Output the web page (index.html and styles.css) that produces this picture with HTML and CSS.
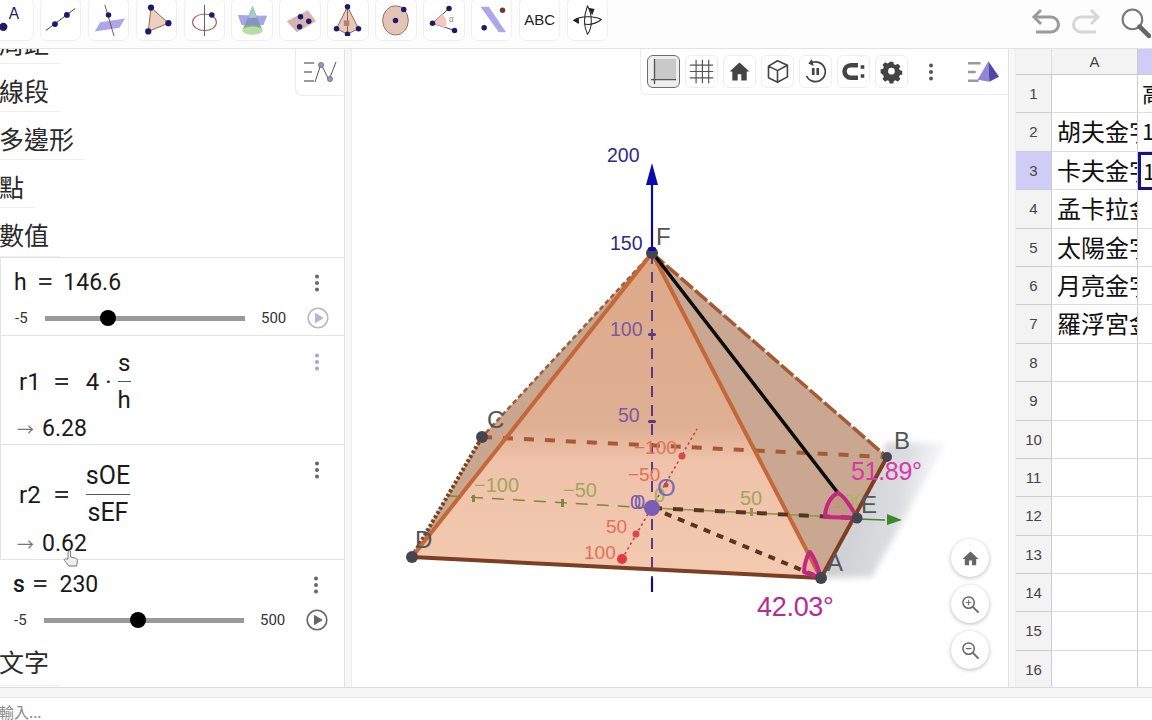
FILE: index.html
```html
<!DOCTYPE html>
<html lang="zh-Hant">
<head>
<meta charset="utf-8">
<title>GeoGebra</title>
<link rel="stylesheet" href="styles.css">
</head>
<body>
<div class="app">
  <header class="toolbar">
    <div class="tools">
      <button class="tool"><svg viewBox="0 0 36 36"><circle cx="8" cy="26" r="4.5" fill="#1b1b6b"/><text x="14" y="17" class="tool-a">A</text></svg></button>
      <button class="tool"><svg viewBox="0 0 36 36"><line x1="2" y1="30" x2="34" y2="6" stroke="#333" stroke-width="1"/><circle cx="12" cy="23" r="3.2" fill="#1b1b6b"/><circle cx="25" cy="13" r="3.2" fill="#1b1b6b"/></svg></button>
      <button class="tool"><svg viewBox="0 0 36 36"><polygon points="3,31 9,21 36,17 30,27" fill="#a9a9ea"/><line x1="14" y1="2" x2="24" y2="36" stroke="#8a3a3a" stroke-width="1"/><circle cx="18" cy="13" r="3" fill="#1b1b6b"/></svg></button>
      <button class="tool"><svg viewBox="0 0 36 36"><polygon points="12,5 31,22 9,31" fill="#ecd0c0" stroke="#8a5a4a"/><circle cx="12" cy="5" r="3.400" fill="#1b1b6b"/><circle cx="31" cy="22" r="3.400" fill="#1b1b6b"/><circle cx="9" cy="31" r="3.400" fill="#1b1b6b"/></svg></button>
      <button class="tool"><svg viewBox="0 0 36 36"><ellipse cx="18" cy="21" rx="13" ry="9" fill="none" stroke="#a85a5a" stroke-width="1.200"/><line x1="18" y1="2" x2="18" y2="36" stroke="#555"/><circle cx="26" cy="13" r="3" fill="#1b1b6b"/></svg></button>
      <button class="tool"><svg viewBox="0 0 36 36"><polygon points="18,3 7,30 29,30" fill="#7ab07a"/><ellipse cx="18" cy="30" rx="11" ry="4.500" fill="#b8dca8"/><polygon points="2,13 34,14 30,24 6,24" fill="#8a8ae0" opacity=".75"/><polygon points="18,3 13,16 23,16" fill="#a8c8d0"/></svg></button>
      <button class="tool"><svg viewBox="0 0 36 36"><polygon points="3,20 26,8 35,20 14,32" fill="#d8b4b0"/><circle cx="18" cy="15" r="3" fill="#1b1b6b"/><circle cx="27" cy="20" r="3" fill="#1b1b6b"/><circle cx="17" cy="26" r="3" fill="#1b1b6b"/></svg></button>
      <button class="tool"><svg viewBox="0 0 36 36"><polygon points="18,4 6,28 18,34 30,28" fill="#e8c8b8" stroke="#8a5a4a"/><line x1="18" y1="4" x2="18" y2="34" stroke="#8a5a4a"/><rect x="14" y="19" width="6" height="6" fill="#b08080"/><circle cx="18" cy="4" r="3" fill="#1b1b6b"/><circle cx="6" cy="28" r="3" fill="#1b1b6b"/><circle cx="30" cy="28" r="3" fill="#1b1b6b"/><circle cx="18" cy="34" r="3" fill="#1b1b6b"/></svg></button>
      <button class="tool"><svg viewBox="0 0 36 36"><ellipse cx="18" cy="19" rx="14" ry="16" fill="#e4c4b4" stroke="#8a6a5a"/><circle cx="18" cy="19" r="3" fill="#1b1b6b"/><circle cx="27" cy="7" r="3" fill="#1b1b6b"/></svg></button>
      <button class="tool"><svg viewBox="0 0 36 36"><path d="M6 22 L24 6 M6 22 L30 30" stroke="#333" fill="none"/><path d="M6 22 L17 12 Q24 20 20 27 Z" fill="#f2c8c0"/><circle cx="6" cy="22" r="3" fill="#1b1b6b"/><circle cx="24" cy="6" r="3" fill="#1b1b6b"/><circle cx="30" cy="30" r="3" fill="#1b1b6b"/><text x="24" y="21" class="tool-alpha">α</text></svg></button>
      <button class="tool"><svg viewBox="0 0 36 36"><polygon points="6,4 15,4 34,32 26,32" fill="#a9a9ea"/><circle cx="30" cy="8" r="3" fill="#6a3a3a"/><circle cx="10" cy="27" r="3" fill="#1b1b6b"/></svg></button>
      <button class="tool tool-text">ABC</button>
      <button class="tool"><svg viewBox="0 0 36 36" fill="none" stroke="#222" stroke-width="1.100"><path d="M18 3 C14 14 14 26 18 34 C23 28 24 14 18 3"/><path d="M3 19 C10 14 26 14 33 18 C27 23 20 24 14 23"/><path d="M3 19 l5 -2 v5z" fill="#222"/><path d="M20 6 l5 1 -2 5z" fill="#222"/></svg></button>
    </div>
    <div class="history">
      <svg class="hist-icon" viewBox="0 0 30 30" fill="none" stroke="#9a9a9a" stroke-width="3"><path d="M3 10 H20 a7.500 7.500 0 0 1 0 15 H5"/><path d="M10 3 L3 10 L10 17"/></svg>
      <svg class="hist-icon" viewBox="0 0 30 30" fill="none" stroke="#d6d6d6" stroke-width="3"><path d="M27 10 H10 a7.500 7.500 0 0 0 0 15 H25"/><path d="M20 3 L27 10 L20 17"/></svg>
      <svg class="search-icon" viewBox="0 0 30 30" fill="none"><circle cx="12" cy="12" r="9.500" stroke="#777" stroke-width="2"/><line x1="19" y1="19" x2="28" y2="28" stroke="#666" stroke-width="4.500" stroke-linecap="round"/></svg>
    </div>
  </header>

  <main class="workspace">
    <section class="algebra">
      <div class="style-tab"><svg viewBox="0 0 34 24" fill="none"><path d="M1 3 H11 M1 12 H9 M1 21 H11" stroke="#999" stroke-width="2"/><path d="M12 22 L18 4 L26 20 L33 2" stroke="#555" stroke-width="1"/><circle cx="18" cy="5" r="2.600" fill="#9a94c8" stroke="#555" stroke-width=".6"/><circle cx="27" cy="19" r="2.600" fill="#9a94c8" stroke="#555" stroke-width=".6"/></svg></div>
      <div class="algebra-scroll">
        <div class="group cut"><span>周距</span></div>
        <div class="group g60"><span>線段</span></div>
        <div class="group g85"><span>多邊形</span></div>
        <div class="group g35"><span>點</span></div>
        <div class="group g60 last"><span>數值</span></div>

        <div class="row slider-row r-h">
          <div class="def"><span>h</span><span class="eq">=</span><span>146.6</span></div>
          <svg class="dots" viewBox="0 0 6 18"><circle cx="3" cy="2.500" r="2"/><circle cx="3" cy="9" r="2"/><circle cx="3" cy="15.500" r="2"/></svg>
          <div class="slider">
            <span class="lim">-5</span>
            <div class="track"><i class="thumb t-h"></i></div>
            <span class="lim">500</span>
            <svg class="play faint" viewBox="0 0 22 22"><circle cx="11" cy="11" r="9.800" fill="none" stroke-width="1.600"/><path d="M8.500 6.500 L16 11 L8.500 15.500Z"/></svg>
          </div>
        </div>

        <div class="row calc r-1">
          <div class="formula"><span>r1</span><span class="eq">=</span><span>4</span><span class="cdot">·</span>
            <span class="frac"><span>s</span><span class="den">h</span></span></div>
          <svg class="dots pale" viewBox="0 0 6 18"><circle cx="3" cy="2.500" r="2"/><circle cx="3" cy="9" r="2"/><circle cx="3" cy="15.500" r="2"/></svg>
          <div class="result"><i class="arrow">→</i>6.28</div>
        </div>

        <div class="row calc r-2">
          <div class="formula"><span>r2</span><span class="eq">=</span>
            <span class="frac"><span>sOE</span><span class="den">sEF</span></span></div>
          <svg class="dots" viewBox="0 0 6 18"><circle cx="3" cy="2.500" r="2"/><circle cx="3" cy="9" r="2"/><circle cx="3" cy="15.500" r="2"/></svg>
          <div class="result"><i class="arrow">→</i>0.62</div>
        </div>

        <div class="row slider-row r-s">
          <div class="def"><span class="bold">s</span><span class="eq tight">=</span><span>230</span></div>
          <svg class="dots" viewBox="0 0 6 18"><circle cx="3" cy="2.500" r="2"/><circle cx="3" cy="9" r="2"/><circle cx="3" cy="15.500" r="2"/></svg>
          <div class="slider">
            <span class="lim">-5</span>
            <div class="track"><i class="thumb t-s"></i></div>
            <span class="lim">500</span>
            <svg class="play" viewBox="0 0 22 22"><circle cx="11" cy="11" r="9.800" fill="none" stroke-width="1.600"/><path d="M8.500 6.500 L16 11 L8.500 15.500Z"/></svg>
          </div>
        </div>
        <div class="group g60 text-group"><span>文字</span></div>
      </div>
      <svg class="hand" viewBox="0 0 16 20"><path d="M5 10 V3 a1.300 1.300 0 0 1 2.600 0 V8 l5 1.200 c1.500.4 2 1.400 1.800 3 L13.600 17 H6 L1.500 11.500 c-.8-1.200.8-2.400 1.800-1.400Z" fill="#eee" stroke="#777" stroke-width="1"/></svg>
    </section>

    <div class="split"></div>

    <section class="graphics">
      <svg class="scene" viewBox="352 48 656 639">
        <defs>
          <linearGradient id="plane" x1="0" y1="0" x2="1" y2="0.2">
            <stop offset="0" stop-color="#bcbec4" stop-opacity=".9"/>
            <stop offset=".7" stop-color="#cdcfd3" stop-opacity=".7"/>
            <stop offset="1" stop-color="#e8e8ea" stop-opacity=".25"/>
          </linearGradient>
          <linearGradient id="front" x1="0" y1="0" x2="0" y2="1">
            <stop offset="0" stop-color="#dca988"/>
            <stop offset=".54" stop-color="#e0b094"/>
            <stop offset=".64" stop-color="#eec3a9"/>
            <stop offset="1" stop-color="#f3c9af"/>
          </linearGradient>
          <filter id="soft"><feGaussianBlur stdDeviation="3"/></filter>
        </defs>

        <polygon class="plane" points="821,577 887,441 946,442 872,576" fill="url(#plane)" filter="url(#soft)"/>
        <polygon points="412,556 821,577 887,456 482,436" fill="#f3cdb5"/>
        <polygon points="652,252 887,456 821,577" fill="#c9a790"/>
        <polygon points="652,252 482,436 412,556" fill="#c9a78f"/>
        <polygon points="652,252 412,556 821,577" fill="url(#front)"/>

        <!-- x axis -->
        <line class="ax-x" x1="622" y1="558" x2="697" y2="428"/>
        <circle cx="622" cy="558" r="5" fill="#e03a3a"/>
        <circle cx="636" cy="533" r="3.500" fill="#d84a4a"/>
        <circle cx="666" cy="484" r="2.500" fill="#c04a4a"/>
        <circle cx="682" cy="455" r="3.500" fill="#d84a4a"/>
        <!-- y axis -->
        <line class="ax-y" x1="450" y1="495" x2="652" y2="507"/>
        <line class="ax-yb" x1="652" y1="507" x2="856" y2="517"/>
        <line x1="857" y1="518" x2="885" y2="519" stroke="#3a8a2a" stroke-width="1.500"/>
        <polygon points="887,513 887,524 902,519" fill="#3a8a2a"/>
        <rect x="561" y="498" width="3" height="8" fill="#7e8a3a"/>
        <rect x="472" y="494" width="3" height="7" fill="#7e8a3a"/>
        <rect x="750" y="507" width="3" height="8" fill="#8e9a4a"/>
        <!-- z axis -->
        <line class="ax-zd" x1="652" y1="252" x2="652" y2="577"/>
        <line class="ax-z" x1="652" y1="252" x2="652" y2="182"/>
        <line class="ax-z" x1="652" y1="577" x2="652" y2="591"/>
        <polygon points="652,162 646,184 658,184" fill="#0a0ab0"/>
        <rect x="648" y="332" width="8" height="3" rx="1.500" fill="#5a3a86"/>
        <rect x="648" y="419" width="8" height="3" rx="1.500" fill="#5a3a86"/>

        <!-- labels behind the solid -->
        <text class="lb-y2" x="832" y="507">100</text>

        <!-- edges -->
        <line class="e-back" x1="482" y1="436" x2="887" y2="456"/>
        <line class="e-hid" x1="412" y1="556" x2="482" y2="436"/>
        <line class="e-hid2" x1="652" y1="252" x2="482" y2="436"/>
        <line class="e-hid3" x1="652" y1="252" x2="887" y2="456"/>
        <line class="e-main" x1="652" y1="252" x2="412" y2="556"/>
        <line class="e-main" x1="652" y1="252" x2="821" y2="577"/>
        <line class="e-dark" x1="412" y1="556" x2="821" y2="577"/>
        <line class="e-dark" x1="821" y1="577" x2="887" y2="456"/>
        <line class="e-black" x1="655" y1="255" x2="838" y2="492"/>
        <line class="e-dash" x1="652" y1="507" x2="857" y2="517"/>
        <line class="e-dash2" x1="652" y1="507" x2="821" y2="577"/>

        <!-- angle markers -->
        <path class="ang1" d="M857 517 L825 516 C825 504 832 494 838 492 C843 494 851 505 857 517Z"/>
        <path class="ang2" d="M821 577 L804 571 C804 562 808 553 810 551 C814 556 818 566 821 577Z"/>

        <!-- points -->
        <circle class="pt" cx="652" cy="252" r="6"/>
        <rect x="648" y="246" width="8" height="4" rx="2" fill="#0a0ab0"/>
        <circle class="pt" cx="482" cy="436" r="6"/>
        <circle class="pt" cx="412" cy="556" r="6"/>
        <circle class="pt" cx="821" cy="577" r="6"/>
        <circle class="pt" cx="857" cy="517" r="5.500"/>
        <circle class="pt" cx="887" cy="456" r="5"/>
        <circle cx="652" cy="507" r="8" fill="#7a5cb4"/>

        <!-- labels -->
        <text class="lb-z" x="607" y="161">200</text>
        <text class="lb-z" x="610" y="249">150</text>
        <text class="lb-zf" x="610" y="335">100</text>
        <text class="lb-zf" x="618" y="421">50</text>
        <text class="lb-pt" x="656" y="244">F</text>
        <text class="lb-pt" x="487" y="427">C</text>
        <text class="lb-pt" x="415" y="547">D</text>
        <text class="lb-pt" x="827" y="570">A</text>
        <text class="lb-pt" x="894" y="448">B</text>
        <text class="lb-pt" x="861" y="512">E</text>
        <text class="lb-y" x="474" y="491">−100</text>
        <text class="lb-y" x="563" y="496">−50</text>
        <text class="lb-y" x="740" y="504">50</text>
        <text class="lb-x" x="634" y="453">−100</text>
        <text class="lb-x" x="628" y="480">−50</text>
        <text class="lb-x" x="606" y="532">50</text>
        <text class="lb-x" x="584" y="558">100</text>
        <text class="lb-o" x="630" y="508">0</text>
        <text class="lb-o" x="634" y="508">0</text>
        <text class="lb-og" x="654" y="501">0</text>
        <text class="lb-o0" x="657" y="495">O</text>
        <text class="lb-ang1" x="851" y="479">51.89°</text>
        <text class="lb-ang2" x="757" y="615">42.03°</text>
      </svg>

      <div class="g-toolbar">
        <button class="g-btn active"><svg viewBox="0 0 30 30"><rect x="5" y="1" width="24" height="23" fill="#c9c9c9"/><path d="M5 1 V29 M1 24 H29" stroke="#555" stroke-width="1.500" fill="none"/></svg></button>
        <button class="g-btn"><svg viewBox="0 0 30 30" stroke="#555" stroke-width="1.300"><path d="M9 2 V28 M16 2 V28 M23 2 V28 M2 8 H28 M2 15 H28 M2 22 H28" fill="none"/></svg></button>
        <button class="g-btn"><svg viewBox="0 0 30 30"><path d="M15 5 L4 15 H7 V25 H13 V18 H17 V25 H23 V15 H26Z" fill="#444"/></svg></button>
        <button class="g-btn"><svg viewBox="0 0 30 30" fill="none" stroke="#444" stroke-width="1.800" stroke-linejoin="round"><path d="M15 3 L26 8 V21 L15 27 L5 22 V9Z M5 9 L15 14 L26 8 M15 14 V27"/></svg></button>
        <button class="g-btn"><svg viewBox="0 0 30 30" fill="none" stroke="#444" stroke-width="1.800"><path d="M9 6 A11 11 0 1 1 5 20"/><path d="M11 1 L7 6 L13 9" fill="#444" stroke="none"/><path d="M12.500 11 V19 M17.500 11 V19" stroke-width="3"/></svg></button>
        <button class="g-btn"><svg viewBox="0 0 30 30" fill="none" stroke="#444"><path d="M20 8 H12 a6.500 6.500 0 0 0 0 14 H20" stroke-width="5"/><rect x="23" y="8" width="4" height="4" fill="#444" stroke="none"/><rect x="23" y="18" width="4" height="4" fill="#444" stroke="none"/></svg></button>
        <button class="g-btn"><svg viewBox="0 0 30 30"><path fill-rule="evenodd" fill="#444" d="M12.500 3h5l.7 3.300 2.400 1 2.900-1.800 3.500 3.500-1.800 2.900 1 2.400 3.300.7v5l-3.300.7-1 2.400 1.800 2.900-3.500 3.500-2.900-1.800-2.400 1-.7 3.300h-5l-.7-3.300-2.400-1-2.900 1.800-3.500-3.500 1.800-2.900-1-2.400L.5 18v-5l3.300-.7 1-2.400L3 7l3.500-3.500 2.900 1.800 2.400-1zM15 11a4.500 4.500 0 1 0 0 9 4.500 4.500 0 0 0 0-9z" transform="translate(2.500 1.800) scale(.83)"/></svg></button>
        <svg class="g-more" viewBox="0 0 6 18"><circle cx="3" cy="2.500" r="2"/><circle cx="3" cy="9" r="2"/><circle cx="3" cy="15.500" r="2"/></svg>
        <svg class="g-style" viewBox="0 0 34 24"><path d="M1 3 H14 M1 12 H9 M1 21 H12" stroke="#999" stroke-width="2.500"/><polygon points="22,1 11,20 23,22" fill="#8f86d8"/><polygon points="22,1 33,17 23,22" fill="#4f46a8"/></svg>
      </div>

      <div class="nav">
        <button class="nav-btn"><svg viewBox="0 0 20 20"><path d="M10 2.500 L1.500 10.500 H4 V17 H8.500 V12 H11.500 V17 H16 V10.500 H18.500Z" fill="#666"/></svg></button>
        <button class="nav-btn"><svg viewBox="0 0 20 20" fill="none" stroke="#666" stroke-width="1.600"><circle cx="8" cy="8" r="6"/><path d="M12.500 12.500 L18.500 18.500" stroke-width="2"/><path d="M8 5 V11 M5 8 H11" stroke-width="1"/></svg></button>
        <button class="nav-btn"><svg viewBox="0 0 20 20" fill="none" stroke="#666" stroke-width="1.600"><circle cx="8" cy="8" r="6"/><path d="M12.500 12.500 L18.500 18.500" stroke-width="2"/><path d="M5 8 H11" stroke-width="1.300"/></svg></button>
      </div>
    </section>

    <div class="split"></div>

    <section class="sheet">
      <div class="cols"><div class="corner"></div><div class="col-a">A</div><div class="col-b"></div></div>
      <div class="sr"><div class="rh">1</div><div class="ca"></div><div class="cb">高</div></div>
      <div class="sr"><div class="rh">2</div><div class="ca">胡夫金字塔</div><div class="cb">1</div></div>
      <div class="sr"><div class="rh on">3</div><div class="ca">卡夫金字塔</div><div class="cb sel">1</div></div>
      <div class="sr"><div class="rh">4</div><div class="ca">孟卡拉金字塔</div><div class="cb"></div></div>
      <div class="sr"><div class="rh">5</div><div class="ca">太陽金字塔</div><div class="cb"></div></div>
      <div class="sr"><div class="rh">6</div><div class="ca">月亮金字塔</div><div class="cb"></div></div>
      <div class="sr"><div class="rh">7</div><div class="ca">羅浮宮金字塔</div><div class="cb"></div></div>
      <div class="sr"><div class="rh">8</div><div class="ca"></div><div class="cb"></div></div>
      <div class="sr"><div class="rh">9</div><div class="ca"></div><div class="cb"></div></div>
      <div class="sr"><div class="rh">10</div><div class="ca"></div><div class="cb"></div></div>
      <div class="sr"><div class="rh">11</div><div class="ca"></div><div class="cb"></div></div>
      <div class="sr"><div class="rh">12</div><div class="ca"></div><div class="cb"></div></div>
      <div class="sr"><div class="rh">13</div><div class="ca"></div><div class="cb"></div></div>
      <div class="sr"><div class="rh">14</div><div class="ca"></div><div class="cb"></div></div>
      <div class="sr"><div class="rh">15</div><div class="ca"></div><div class="cb"></div></div>
      <div class="sr"><div class="rh">16</div><div class="ca"></div><div class="cb"></div></div>
    </section>
  </main>

  <footer class="inputbar"><div class="band"></div><div class="input">輸入...</div></footer>
</div>
</body>
</html>
```

FILE: styles.css
```css
* { box-sizing: border-box; }
html, body { margin: 0; padding: 0; height: 100%; overflow: hidden; background: #fff; }
body { font-family: Roboto, "Noto Sans CJK TC", sans-serif; color: #1a1a1a; }
button { padding: 0; font: inherit; }
.app { width: 1152px; height: 720px; display: flex; flex-direction: column; overflow: hidden; }

/* top toolbar */
.toolbar { height: 49px; flex: none; display: flex; justify-content: space-between; border-bottom: 1px solid #e2e2e2; background: #fdfdfd; overflow: hidden; }
.tools { display: flex; gap: 6.4px; margin: -3px 0 0 -8px; height: 44px; }
.tool { width: 41.5px; height: 44px; flex: none; background: #fff; border: 1px solid #efefef; border-radius: 7px; display: flex; align-items: center; justify-content: center; }
.tool svg { width: 33px; height: 33px; }
.tool-a { font: 17px "Liberation Sans", sans-serif; fill: #1b1b6b; }
.tool-alpha { font: 9px "Liberation Sans", sans-serif; fill: #888; }
.tool-text { font: 15px "Liberation Sans", sans-serif; color: #222; }
.history { display: flex; align-items: flex-start; padding-top: 7px; margin-right: 1px; }
.hist-icon { width: 30px; height: 30px; margin-right: 10px; }
.search-icon { width: 31px; height: 31px; margin-left: 9px; }

/* layout */
.workspace { flex: 1; min-height: 0; display: flex; }
.split { width: 8px; flex: none; background: #f7f7f7; border-left: 1px solid #e2e2e2; border-right: 1px solid #ececec; }

/* algebra */
.algebra { width: 344px; flex: none; position: relative; overflow: hidden; }
.style-tab { position: absolute; right: 0; top: 0; width: 49px; height: 47px; background: #fff; border: 1px solid #e9e9e9; border-top: 0; border-right: 0; border-radius: 0 0 0 7px; display: flex; align-items: center; justify-content: center; z-index: 2; }
.style-tab svg { width: 34px; height: 24px; }
.algebra-scroll { margin-top: -33px; }
.group { height: 48px; font-size: 25px; line-height: 52px; white-space: nowrap; margin-left: -1px; position: relative; color: #2a2a2a; font-family: "Noto Sans CJK TC", sans-serif; }
.group::after { content: ""; position: absolute; left: 0; bottom: 0; height: 1px; background: #eee; width: 61px; }
.g85::after { width: 86px; }
.g35::after { width: 36px; }
.last { height: 49px; }
.row { position: relative; border-top: 1px solid #e3e3e3; border-left: 1px solid #e3e3e3; }
.r-h { height: 78px; }
.r-1 { height: 109px; }
.r-2 { height: 115px; }
.r-s { height: 86px; border-left: 0; }
.def { position: absolute; left: 13px; top: 10px; font-size: 23px; line-height: 30px; display: flex; }
.eq { margin: 0 12px; color: #333; transform: scaleX(1.3); }
.eq.tight { margin: 0 13px 0 9px; }
.bold { font-weight: 500; }
.dots { position: absolute; left: 313px; top: 16px; width: 6px; height: 18px; fill: #666; }
.dots.pale { fill: #a9a4c4; top: 17px; }
.slider { position: absolute; left: 14px; top: 49px; display: flex; align-items: center; height: 22px; width: 320px; }
.lim { font-size: 15px; color: #333; }
.lim:first-child { width: 30px; }
.track { width: 200px; height: 5px; background: #999; position: relative; margin-right: 16px; }
.thumb { position: absolute; top: -5.5px; width: 16px; height: 16px; border-radius: 50%; background: #000; }
.t-h { left: 55px; }
.t-s { left: 86px; }
.play { position: absolute; left: 292px; width: 22px; height: 22px; stroke: #666; fill: #666; }
.play.faint { stroke: #b9b4d2; fill: #b9b4d2; }
.formula { position: absolute; left: 18px; font-size: 24px; display: flex; align-items: center; }
.formula .eq { margin: 0 18px 0 14px; }
.cdot { margin: 0 6px; }
.frac { display: flex; flex-direction: column; align-items: center; line-height: 36px; }
.den { border-top: 1.5px solid #555; display: block; width: 100%; text-align: center; }
.r-1 .formula { top: 9px; }
.r-2 .formula { top: 13px; }
.r-2 .frac { font-size: 25px; }
.result { position: absolute; left: 16px; font-size: 23px; line-height: 30px; }
.r-1 .result { top: 78px; }
.r-2 .result { top: 84px; }
.arrow { font-style: normal; color: #777; font-size: 17px; margin-right: 8px; }
.text-group { margin-top: -7px; height: 48px; line-height: 46px; }
.hand { position: absolute; left: 63px; top: 500px; width: 16px; height: 20px; }

/* graphics */
.graphics { width: 656px; flex: none; position: relative; overflow: hidden; background: #fff; }
.scene { display: block; width: 656px; height: 639px; }
.ax-x { stroke: #c0453f; stroke-width: 1.6; stroke-dasharray: 2.5 3; }
.ax-y { stroke: #7e8a3a; stroke-width: 1.6; stroke-dasharray: 12 9; }
.ax-yb { stroke: #8e9a4a; stroke-width: 1.6; }
.ax-z { stroke: #0a0a9a; stroke-width: 2.2; }
.ax-zd { stroke: #5a3a86; stroke-width: 2; stroke-dasharray: 11 8; }
.e-back { stroke: #a65a36; stroke-width: 4; stroke-dasharray: 10 11; }
.e-hid { stroke: #7a4326; stroke-width: 4; stroke-dasharray: 3 2; }
.e-hid2 { stroke: #9a5c3c; stroke-width: 2.5; stroke-dasharray: 5 3; }
.e-hid3 { stroke: #a55a34; stroke-width: 3.5; stroke-dasharray: 16 3; }
.e-main { stroke: #c4683a; stroke-width: 4; }
.e-dark { stroke: #7d3f22; stroke-width: 4; }
.e-black { stroke: #0c0c0c; stroke-width: 3.6; }
.e-dash { stroke: #5a3420; stroke-width: 4; stroke-dasharray: 10 11; }
.e-dash2 { stroke: #5a3420; stroke-width: 4; stroke-dasharray: 7 7; }
.ang1, .ang2 { fill: rgba(200, 40, 130, .14); stroke: #c2287f; stroke-width: 4; stroke-linejoin: round; }
.pt { fill: #45454d; }
.scene text { font-family: "Liberation Sans", sans-serif; }
.lb-z { font-size: 19.5px; fill: #2c2c86; }
.lb-zf { font-size: 19.5px; fill: #7c5aa0; }
.lb-pt { font-size: 24px; fill: #555; }
.lb-y { font-size: 20px; fill: #a2a55e; }
.lb-y2 { font-size: 20px; fill: #a9b46a; }
.lb-x { font-size: 19px; fill: #e2705e; }
.lb-o { font-size: 20px; fill: #7a5cb4; }
.lb-og { font-size: 20px; fill: #a2b05e; }
.lb-o0 { font-size: 24px; fill: #7a6cb8; }
.lb-ang1 { font-size: 25px; fill: #d63aa8; letter-spacing: -.3px; }
.lb-ang2 { font-size: 27px; fill: #b52a96; letter-spacing: -.3px; }

.g-toolbar { position: absolute; left: 288px; top: 0; width: 368px; height: 46px; background: #fff; border: 1px solid #ececec; border-top: 0; border-right: 0; border-radius: 0 0 0 7px; display: flex; align-items: center; gap: 5px; padding-left: 6px; }
.g-btn { width: 33px; height: 33px; flex: none; background: #fff; border: 1px solid #eee; border-radius: 6px; display: flex; align-items: center; justify-content: center; }
.g-btn svg { width: 27px; height: 27px; }
.g-btn.active { border: 1px solid #6a6a78; background: #eee; }
.g-more { width: 6px; height: 18px; fill: #555; margin-left: 15px; flex: none; }
.g-style { width: 33px; height: 24px; margin-left: 28px; flex: none; }

.nav { position: absolute; left: 599px; top: 490px; display: flex; flex-direction: column; gap: 8px; }
.nav-btn { width: 38px; height: 38px; border-radius: 50%; border: 0; background: #fff; box-shadow: 0 1px 4px rgba(0,0,0,.28); display: flex; align-items: center; justify-content: center; }
.nav-btn svg { width: 19px; height: 19px; }

/* spreadsheet */
.sheet { flex: 1; min-width: 0; overflow: hidden; font-family: "Liberation Sans", sans-serif; }
.cols { display: flex; height: 26px; }
.corner { width: 36px; flex: none; background: #f3f3f3; border-right: 1px solid #ddd; border-bottom: 1px solid #ccc; }
.col-a { width: 86px; flex: none; background: #f3f3f3; border-right: 1px solid #ccc; border-bottom: 1px solid #ccc; text-align: center; font-size: 15px; line-height: 25px; color: #444; }
.col-b { flex: 1; background: #cfcdf6; border-bottom: 1px solid #ccc; }
.sr { display: flex; height: 38.4px; }
.rh { width: 36px; flex: none; background: #f3f3f3; border-right: 1px solid #ccc; border-bottom: 1px solid #ccc; text-align: center; font-size: 15px; line-height: 37px; color: #444; }
.rh.on { background: #cfcdf6; }
.ca { width: 86px; flex: none; border-right: 1px solid #ccc; border-bottom: 1px solid #ddd; padding-left: 5px; font: 24px/35px "Noto Sans CJK TC", sans-serif; color: #111; white-space: nowrap; overflow: hidden; }
.cb { flex: 1; min-width: 0; border-bottom: 1px solid #ddd; padding-left: 4px; font: 22px/35px "Noto Sans CJK TC", sans-serif; overflow: hidden; white-space: nowrap; color: #111; }
.cb.sel { border: 3px solid #14148a; border-right: 0; padding-left: 2px; line-height: 30px; }

/* input */
.inputbar { height: 33px; flex: none; }
.band { height: 11px; background: #f7f7f7; border-top: 1px solid #dcdcdc; border-bottom: 1px solid #e6e6e6; }
.input { height: 22px; margin-left: -1px; font: 15px/27px "Noto Sans CJK TC", sans-serif; color: #888; white-space: nowrap; }
```
